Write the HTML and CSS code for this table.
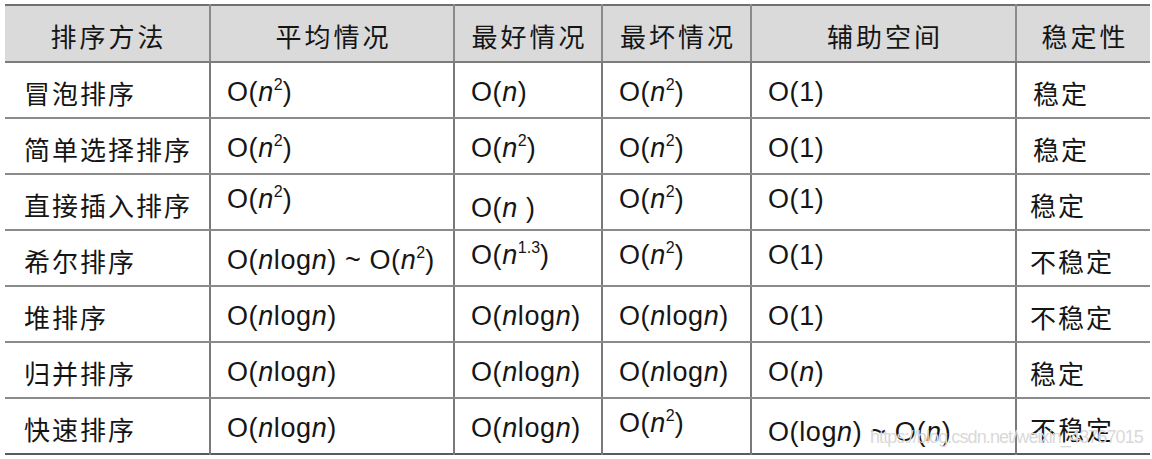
FILE: index.html
```html
<!DOCTYPE html>
<html lang="zh">
<head>
<meta charset="utf-8">
<title>排序方法比较</title>
<link rel="stylesheet" href="styles.css">
</head>
<body>
<div class="wrap">
<table class="sort-table">
  <colgroup>
    <col class="c1"><col class="c2"><col class="c3"><col class="c4"><col class="c5"><col class="c6">
  </colgroup>
  <thead>
    <tr>
      <th>排序方法</th><th>平均情况</th><th>最好情况</th><th>最坏情况</th><th>辅助空间</th><th>稳定性</th>
    </tr>
  </thead>
  <tbody>
    <tr>
      <td class="name">冒泡排序</td>
      <td>O(<i>n</i><sup>2</sup>)</td>
      <td>O(<i>n</i>)</td>
      <td>O(<i>n</i><sup>2</sup>)</td>
      <td>O(1)</td>
      <td class="name stab">稳定</td>
    </tr>
    <tr>
      <td class="name">简单选择排序</td>
      <td>O(<i>n</i><sup>2</sup>)</td>
      <td>O(<i>n</i><sup>2</sup>)</td>
      <td>O(<i>n</i><sup>2</sup>)</td>
      <td>O(1)</td>
      <td class="name stab">稳定</td>
    </tr>
    <tr>
      <td class="name">直接插入排序</td>
      <td class="up">O(<i>n</i><sup>2</sup>)</td>
      <td class="down">O(<i>n</i> )</td>
      <td class="up">O(<i>n</i><sup>2</sup>)</td>
      <td class="up">O(1)</td>
      <td class="name">稳定</td>
    </tr>
    <tr>
      <td class="name">希尔排序</td>
      <td>O(<i>n</i>log<i>n</i>) ~ O(<i>n</i><sup>2</sup>)</td>
      <td class="up">O(<i>n</i><sup>1.3</sup>)</td>
      <td class="up">O(<i>n</i><sup>2</sup>)</td>
      <td class="up">O(1)</td>
      <td class="name">不稳定</td>
    </tr>
    <tr>
      <td class="name">堆排序</td>
      <td>O(<i>n</i>log<i>n</i>)</td>
      <td>O(<i>n</i>log<i>n</i>)</td>
      <td>O(<i>n</i>log<i>n</i>)</td>
      <td>O(1)</td>
      <td class="name">不稳定</td>
    </tr>
    <tr>
      <td class="name">归并排序</td>
      <td>O(<i>n</i>log<i>n</i>)</td>
      <td>O(<i>n</i>log<i>n</i>)</td>
      <td>O(<i>n</i>log<i>n</i>)</td>
      <td>O(<i>n</i>)</td>
      <td class="name">稳定</td>
    </tr>
    <tr>
      <td class="name">快速排序</td>
      <td>O(<i>n</i>log<i>n</i>)</td>
      <td>O(<i>n</i>log<i>n</i>)</td>
      <td class="up">O(<i>n</i><sup>2</sup>)</td>
      <td class="down">O(log<i>n</i>) ~ O(<i>n</i>)</td>
      <td class="name">不稳定</td>
    </tr>
  </tbody>
</table>
<div class="watermark">https://blog.csdn.net/weixin_43767015</div>
</div>
</body>
</html>
```

FILE: styles.css
```css
html, body {
  margin: 0;
  padding: 0;
  background: #ffffff;
}

.wrap {
  position: relative;
  width: 1152px;
  height: 459px;
  padding: 4px 0 0 5px;
  box-sizing: border-box;
  overflow: hidden;
}

.sort-table {
  border-collapse: collapse;
  table-layout: fixed;
  width: 1145px;
  font-family: "Liberation Sans", "Noto Sans CJK SC", Arial, sans-serif;
  color: #151515;
  border-top: 2px solid #707070;
  border-bottom: 2px solid #5a5a5a;
}

.c1 { width: 205px; }
.c2 { width: 244px; }
.c3 { width: 148px; }
.c4 { width: 149px; }
.c5 { width: 265px; }
.c6 { width: 134px; }

.sort-table th {
  height: 57px;
  background: #dadada;
  font-family: "Noto Sans CJK SC", sans-serif;
  font-weight: 400;
  font-size: 26px;
  letter-spacing: 3px;
  text-indent: 3px;
  text-align: center;
  padding: 4px 0 0;
  border-bottom: 2px solid #7c7c7c;
  border-left: 2px solid #8a8a8a;
  box-sizing: border-box;
}

.sort-table td {
  height: 56px;
  font-size: 27px;
  letter-spacing: 0.6px;
  text-align: left;
  padding: 5px 0 0 16px;
  border-bottom: 2px solid #8a8a8a;
  border-left: 2px solid #7a7a7a;
  white-space: nowrap;
  box-sizing: border-box;
}

.sort-table th:first-child,
.sort-table td:first-child {
  border-left: none;
}

.sort-table tbody tr:last-child td {
  border-bottom: none;
}

.sort-table td.name {
  font-family: "Noto Sans CJK SC", sans-serif;
  font-size: 26px;
  letter-spacing: 2px;
  padding-left: 13px;
}

.sort-table td.stab {
  padding-left: 16px;
}

.sort-table td:first-child.name {
  padding-left: 19px;
}

.sort-table td.up {
  padding-top: 0;
  padding-bottom: 6px;
}

.sort-table td.down {
  padding-top: 12px;
}

.sort-table i {
  font-style: italic;
}

.sort-table sup {
  font-size: 16px;
  vertical-align: 0.66em;
  line-height: 0;
  letter-spacing: 0;
}

.watermark {
  position: absolute;
  left: 870px;
  top: 427px;
  font-family: "Liberation Sans", Arial, sans-serif;
  font-size: 18px;
  color: #d9d9d9;
  letter-spacing: -0.9px;
  white-space: nowrap;
}
```
